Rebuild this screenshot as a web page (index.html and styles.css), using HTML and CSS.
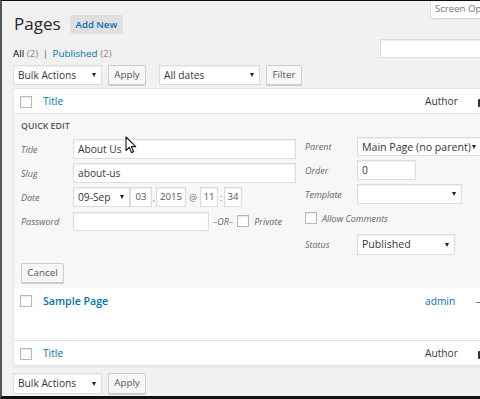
FILE: index.html
```html
<!DOCTYPE html>
<html lang="en">
<head>
    <meta charset="UTF-8">
    <title>Pages</title>
    <link rel="stylesheet" href="styles.css">
</head>
<body>
<div class="frame">
<div class="wrap">

    <!-- 상단: 제목 + Screen Options -->
    <div class="top">
        <div class="title-row">
            <h1>Pages</h1>
            <span class="add-new">Add New</span>
        </div>
        <div class="screen-opt">Screen Options</div>
    </div>

    <div class="views-row">
        <div class="subsubsub">
            <span class="cur">All</span> <span class="count">(2)</span> <span class="sep">|</span>
            <a>Published</a> <span class="count">(2)</span>
        </div>
        <div class="search-box"></div>
    </div>

    <div class="tablenav">
        <div class="select w-bulk">Bulk Actions<span class="arrow"></span></div>
        <span class="button w-apply">Apply</span>
        <div class="select w-dates">All dates<span class="arrow"></span></div>
        <span class="button w-filter">Filter</span>
    </div>

    <table class="list">
        <thead>
            <tr>
                <th class="col-cb"><span class="cb"></span></th>
                <th class="col-title"><a>Title</a></th>
                <th class="col-author">Author</th>
                <th class="col-comments"><span class="bubble"></span></th>
            </tr>
        </thead>
        <tbody>
            <!-- 빠른 편집 -->
            <tr class="quick-edit">
                <td colspan="4">
                    <h4>Quick Edit</h4>
                    <div class="qe-cols">
                        <div class="qe-left">
                            <div class="field">
                                <label>Title</label>
                                <div class="input w-title">About Us</div>
                            </div>
                            <div class="field">
                                <label>Slug</label>
                                <div class="input w-title">about-us</div>
                            </div>
                            <div class="field">
                                <label>Date</label>
                                <div class="select w-month">09-Sep<span class="arrow"></span></div>
                                <div class="input small w-day">03</div>
                                <span class="sym w-comma">,</span>
                                <div class="input small w-year">2015</div>
                                <span class="sym w-at">@</span>
                                <div class="input small w-hm">11</div>
                                <span class="sym w-colon">:</span>
                                <div class="input small w-hm">34</div>
                            </div>
                            <div class="field">
                                <label>Password</label>
                                <div class="input w-pass"></div>
                                <em class="or">–OR–</em>
                                <span class="cb"></span>
                                <em class="private">Private</em>
                            </div>
                        </div>
                        <div class="qe-right">
                            <div class="field h19">
                                <label>Parent</label>
                                <div class="select w-parent">Main Page (no parent)<span class="arrow"></span></div>
                            </div>
                            <div class="field">
                                <label>Order</label>
                                <div class="input w-order">0</div>
                            </div>
                            <div class="field">
                                <label>Template</label>
                                <div class="select w-template"><span class="arrow"></span></div>
                            </div>
                            <div class="field">
                                <span class="cb"></span>
                                <em class="allow">Allow Comments</em>
                            </div>
                            <div class="field status">
                                <label>Status</label>
                                <div class="select w-status">Published<span class="arrow"></span></div>
                            </div>
                        </div>
                    </div>
                    <span class="button w-cancel">Cancel</span>
                </td>
            </tr>
            <tr class="page-row">
                <td class="col-cb"><span class="cb"></span></td>
                <td class="col-title"><a class="row-title">Sample Page</a></td>
                <td class="col-author"><a>admin</a></td>
                <td class="col-comments">—</td>
            </tr>
        </tbody>
        <tfoot>
            <tr>
                <th class="col-cb"><span class="cb"></span></th>
                <th class="col-title"><a>Title</a></th>
                <th class="col-author">Author</th>
                <th class="col-comments"><span class="bubble"></span></th>
            </tr>
        </tfoot>
    </table>

    <div class="tablenav bottom">
        <div class="select w-bulk">Bulk Actions<span class="arrow"></span></div>
        <span class="button w-apply">Apply</span>
    </div>

</div>

<!-- 마우스 커서 -->
<svg class="cursor" width="12" height="18" viewBox="0 0 12 18">
    <path d="M1 1 L1 14.5 L4.3 11.4 L6.6 16.6 L8.6 15.7 L6.4 10.6 L10.8 10.6 Z" fill="#fff" stroke="#111" stroke-width="1.1" stroke-linejoin="round"/>
</svg>
</div>
</body>
</html>
```

FILE: styles.css
```css
body {
    margin: 0;
    background: #f1f1f1;
    font-family: "Open Sans", "Liberation Sans", sans-serif;
    font-size: 10.2px;
    color: #444;
    overflow: hidden;
}

a {
    color: #0073aa;
}

.frame {
    position: relative;
    width: 480px;
    height: 399px;
    box-sizing: border-box;
    border-top: 1px solid #111;
    border-left: 2px solid #555;
    border-bottom: 3px solid #111;
    overflow: hidden;
}

.wrap {
    width: 511px;
    padding-left: 11px;
}

/* 상단 */
.top {
    display: flex;
    justify-content: space-between;
    align-items: flex-start;
    height: 33px;
}

.title-row {
    display: flex;
    align-items: center;
    gap: 9px;
    margin-top: 13px;
    margin-left: 1px;
}

h1 {
    margin: 0;
    font-size: 17px;
    font-weight: 400;
    line-height: 20px;
    color: #23282d;
}

.add-new {
    background: #e0e0e0;
    color: #0073aa;
    font-weight: 600;
    font-size: 9.6px;
    line-height: 19px;
    padding: 0 6px;
    border-radius: 2px;
}

.screen-opt {
    width: 88px;
    height: 17px;
    line-height: 16px;
    padding-left: 4px;
    background: #fff;
    border: 1px solid #ddd;
    border-top: none;
    border-radius: 0 0 3px 3px;
    box-shadow: 0 1px 1px rgba(0, 0, 0, 0.04);
    color: #72777c;
    font-size: 9.6px;
}

.views-row {
    display: flex;
    justify-content: space-between;
    align-items: flex-start;
    margin-top: 5px;
}

.subsubsub {
    margin-top: 9px;
    line-height: 12px;
    font-size: 9.8px;
}

.subsubsub .cur {
    color: #000;
}

.subsubsub .count {
    color: #888;
}

.subsubsub .sep {
    color: #666;
    margin: 0 2px;
}

.search-box {
    width: 118px;
    height: 19px;
    box-sizing: border-box;
    margin-right: 26px;
    background: #fff;
    border: 1px solid #ddd;
    box-shadow: inset 0 1px 2px rgba(0, 0, 0, 0.07);
}

/* 버튼, 셀렉트 */
.tablenav {
    display: flex;
    align-items: center;
    margin-top: 5px;
    height: 20px;
}

.tablenav.bottom {
    margin-top: 7px;
    height: 21px;
}

.tablenav .w-apply {
    margin-left: 6px;
}

.tablenav .w-dates {
    margin-left: 13px;
}

.tablenav .w-filter {
    margin-left: 6px;
}

.select {
    position: relative;
    height: 20px;
    box-sizing: border-box;
    line-height: 18px;
    padding-left: 4px;
    background: #fff;
    border: 1px solid #ddd;
    box-shadow: inset 0 1px 2px rgba(0, 0, 0, 0.07);
    color: #32373c;
    white-space: nowrap;
}

.tablenav .select {
    height: 100%;
}

.select .arrow {
    position: absolute;
    right: 5px;
    top: 50%;
    margin-top: -2px;
    border-left: 2.5px solid transparent;
    border-right: 2.5px solid transparent;
    border-top: 4px solid #222;
}

.button {
    display: inline-block;
    height: 100%;
    box-sizing: border-box;
    line-height: 18px;
    text-align: center;
    background: #f7f7f7;
    border: 1px solid #ccc;
    border-radius: 2px;
    box-shadow: 0 1px 0 #ccc;
    color: #555;
    font-size: 9.8px;
}

.w-bulk { width: 89px; }
.w-apply { width: 38px; }
.w-dates { width: 101px; }
.w-filter { width: 36px; }

/* 표 */
.list {
    margin-top: 3px;
    width: 500px;
    table-layout: fixed;
    border-spacing: 0;
    background: #fff;
    border: 1px solid #e5e5e5;
    box-shadow: 0 1px 1px rgba(0, 0, 0, 0.04);
}

.list th,
.list td {
    padding: 0;
    text-align: left;
    font-weight: 400;
}

.list thead th {
    height: 24px;
    border-bottom: 1px solid #e1e1e1;
}

.list tfoot th {
    height: 24px;
    border-top: 1px solid #e1e1e1;
}

.col-cb {
    width: 29px;
}

.col-title {
    width: 382px;
}

.col-author {
    width: 51px;
    color: #32373c;
}

.list th.col-cb .cb,
.list td.col-cb .cb {
    margin-left: 6px;
}

.cb {
    display: inline-block;
    width: 12px;
    height: 12px;
    box-sizing: border-box;
    vertical-align: middle;
    background: #fff;
    border: 1px solid #b4b9be;
    box-shadow: inset 0 1px 2px rgba(0, 0, 0, 0.1);
}

.bubble {
    display: inline-block;
    width: 9px;
    height: 8px;
    margin-left: 2px;
    margin-top: 1px;
    vertical-align: middle;
    background: #333;
    border-radius: 1px;
}

.page-row td {
    height: 52px;
    vertical-align: top;
    padding-top: 6px;
    box-sizing: border-box;
    line-height: 14px;
}

.page-row .col-cb .cb {
    vertical-align: top;
    margin-top: 1px;
}

.row-title {
    font-weight: 600;
    font-size: 10.6px;
}

.page-row .col-comments {
    color: #666;
    padding-left: 0;
}

/* 빠른 편집 */
.quick-edit td {
    background: #f7f7f7;
    padding: 0 8px 5px 7px;
}

.quick-edit h4 {
    margin: 4px 0 0;
    line-height: 16px;
    font-size: 8.8px;
    font-weight: 600;
    text-transform: uppercase;
    color: #555;
}

.qe-cols {
    display: flex;
    margin-top: 3px;
}

.qe-left {
    width: 275px;
    padding-top: 2px;
}

.qe-right {
    margin-left: 9px;
}

.field {
    display: flex;
    align-items: center;
    height: 20px;
    margin-bottom: 4px;
}

.field.h19 {
    height: 19px;
}

.field.status {
    height: 21px;
    margin-top: 6px;
    margin-bottom: 0;
}

.field label {
    width: 52px;
    flex-shrink: 0;
    font-style: italic;
    font-size: 9px;
    color: #666;
}

.field .select {
    height: 100%;
}

.input {
    height: 100%;
    box-sizing: border-box;
    line-height: 18px;
    padding-left: 4px;
    background: #fff;
    border: 1px solid #ddd;
    box-shadow: inset 0 1px 2px rgba(0, 0, 0, 0.07);
    color: #32373c;
    font-size: 10.2px;
}

.input.small {
    padding: 0;
    text-align: center;
    color: #555;
    font-size: 9.6px;
}

.w-title { width: 223px; }
.w-month { width: 57px; }
.w-day { width: 22px; }
.w-year { width: 30px; }
.w-hm { width: 18px; }
.w-pass { width: 136px; height: 19px; }
.w-parent { width: 125px; font-size: 10.6px; }
.w-order { width: 59px; }
.w-template { width: 105px; }
.w-status { width: 98px; font-size: 10.6px; }

.sym {
    text-align: center;
    color: #777;
    font-size: 9px;
}

.w-comma { width: 4px; }
.w-at { width: 14px; }
.w-colon { width: 6px; }

.or,
.private,
.allow {
    font-size: 9px;
    color: #666;
}

.or {
    margin-left: 4px;
    margin-right: 4px;
}

.private {
    margin-left: 5px;
}

.allow {
    margin-left: 5px;
}

.button.w-cancel {
    width: 43px;
    height: 20px;
    margin-top: 8px;
}

/* 커서 */
.cursor {
    position: absolute;
    left: 123px;
    top: 135px;
}
```
